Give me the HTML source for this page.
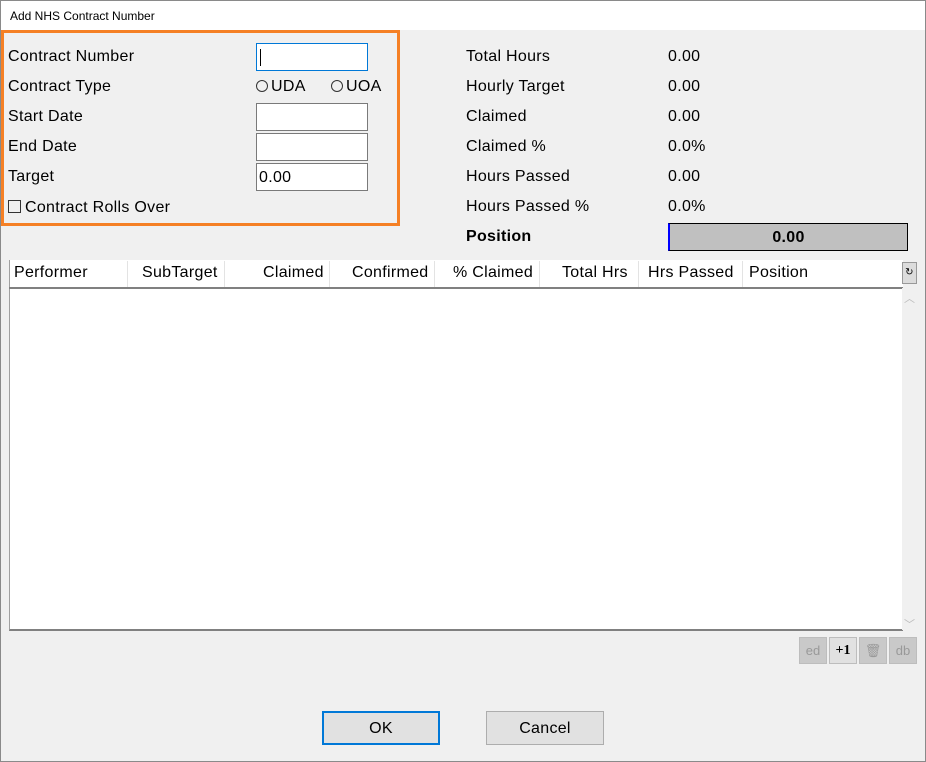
<!DOCTYPE html>
<html><head><style>
*{margin:0;padding:0;box-sizing:border-box}
body{width:926px;height:762px;background:#f0f0f0;font-family:"Liberation Sans",sans-serif;font-size:16px;color:#000;position:relative;overflow:hidden;letter-spacing:0.3px}
.a{position:absolute;white-space:nowrap}
.win{position:absolute;left:0;top:0;width:926px;height:762px;border:1px solid #8a8a8a}
.tb{position:absolute;left:1px;top:1px;width:924px;height:29px;background:#fff;font-size:12px;padding:8px 0 0 9px;letter-spacing:0}
.inp{position:absolute;background:#fff;border:1px solid #7a7a7a;width:112px;height:28px;padding:5px 2px;font-size:16px}
.rad{display:inline-block;width:12px;height:12px;border:1px solid #333;border-radius:50%;margin-right:3px;vertical-align:-1px}
.th{position:absolute;top:264px;font-size:16px}
.sep{position:absolute;top:261px;width:1px;height:26px;background:#e3e3e3}
.btn{position:absolute;width:118px;height:34px;background:#e1e1e1;border:1px solid #adadad;text-align:center;line-height:33px;font-size:16px}
.sb{position:absolute;top:637px;width:28px;height:27px;background:#c9c9c9;border:1px solid #bdbdbd;text-align:center;line-height:25px;font-size:13px;color:#999;letter-spacing:0}
</style></head><body>
<div class="win"></div>
<div class="tb">Add NHS Contract Number</div>
<div class="a" style="left:1px;top:30px;width:399px;height:196px;border:3px solid #f58025"></div>
<div class="a" style="left:8px;top:48px">Contract Number</div>
<div class="a" style="left:8px;top:78px">Contract Type</div>
<div class="a" style="left:8px;top:108px">Start Date</div>
<div class="a" style="left:8px;top:138px">End Date</div>
<div class="a" style="left:8px;top:168px">Target</div>
<div class="a" style="left:8px;top:199px"><span style="display:inline-block;width:13px;height:13px;border:1px solid #333;margin-right:4px;vertical-align:-1px"></span>Contract Rolls Over</div>
<div class="inp" style="left:256px;top:43px;border-color:#0078d7"><span style="display:inline-block;width:1px;height:17px;background:#000;margin-left:1px"></span></div>
<div class="a" style="left:256px;top:78px"><span class="rad"></span>UDA</div>
<div class="a" style="left:331px;top:78px"><span class="rad"></span>UOA</div>
<div class="inp" style="left:256px;top:103px"></div>
<div class="inp" style="left:256px;top:133px"></div>
<div class="inp" style="left:256px;top:163px">0.00</div>

<div class="a" style="left:466px;top:48px">Total Hours</div><div class="a" style="left:668px;top:48px">0.00</div>
<div class="a" style="left:466px;top:78px">Hourly Target</div><div class="a" style="left:668px;top:78px">0.00</div>
<div class="a" style="left:466px;top:108px">Claimed</div><div class="a" style="left:668px;top:108px">0.00</div>
<div class="a" style="left:466px;top:138px">Claimed %</div><div class="a" style="left:668px;top:138px">0.0%</div>
<div class="a" style="left:466px;top:168px">Hours Passed</div><div class="a" style="left:668px;top:168px">0.00</div>
<div class="a" style="left:466px;top:198px">Hours Passed %</div><div class="a" style="left:668px;top:198px">0.0%</div>
<div class="a" style="left:466px;top:228px;font-weight:bold">Position</div>
<div class="a" style="left:668px;top:223px;width:240px;height:28px;background:#c0c0c0;border:1px solid #000;border-left:2px solid #0000ff;text-align:center;line-height:27px;font-weight:bold">0.00</div>

<div class="a" style="left:9px;top:260px;width:894px;height:371px;background:#fff;border-bottom:2px solid #808080;border-left:1px solid #a0a0a0"></div>
<div class="a" style="left:9px;top:287px;width:894px;height:2px;background:#808080"></div>
<div class="a" style="left:902px;top:288px;width:16px;height:342px;background:#f0f0f0"></div>
<div class="th" style="left:14px">Performer</div>
<div class="th" style="left:142px">SubTarget</div>
<div class="th" style="left:263px">Claimed</div>
<div class="th" style="left:352px">Confirmed</div>
<div class="th" style="left:453px">% Claimed</div>
<div class="th" style="left:562px">Total Hrs</div>
<div class="th" style="left:648px">Hrs Passed</div>
<div class="th" style="left:749px">Position</div>
<div class="sep" style="left:127px"></div><div class="sep" style="left:224px"></div><div class="sep" style="left:329px"></div><div class="sep" style="left:434px"></div><div class="sep" style="left:539px"></div><div class="sep" style="left:638px"></div><div class="sep" style="left:742px"></div>
<div class="a" style="left:902px;top:262px;width:15px;height:22px;background:#dcdcdc;border:1px solid #999;font-size:10px;text-align:center;line-height:20px">↻</div>
<div class="a" style="left:904px;top:290px;font-size:11px;color:#bbb">︿</div>
<div class="a" style="left:904px;top:616px;font-size:11px;color:#bbb">﹀</div>

<div class="sb" style="left:799px">ed</div>
<div class="sb" style="left:829px;background:#e1e1e1;color:#000;font-weight:bold;font-family:'Liberation Serif',serif;font-size:14px">+1</div>
<div class="sb" style="left:859px">🗑</div>
<div class="sb" style="left:889px">db</div>

<div class="btn" style="left:322px;top:711px;border:2px solid #0078d7;line-height:31px">OK</div>
<div class="btn" style="left:486px;top:711px">Cancel</div>
</body></html>
